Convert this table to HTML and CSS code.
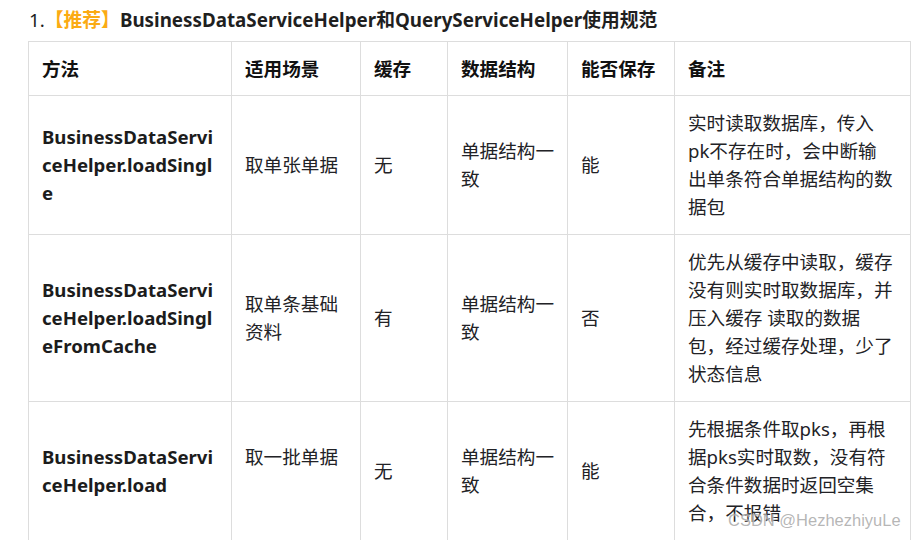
FILE: index.html
```html
<!DOCTYPE html>
<html lang="zh-CN">
<head>
<meta charset="utf-8">
<link rel="stylesheet" href="styles.css">
</head>
<body>
<div class="page">
  <p class="title"><span class="num">1.</span><span class="tag">【推荐】</span>BusinessDataServiceHelper和QueryServiceHelper使用规范</p>
  <table class="spec">
    <colgroup>
      <col class="c1"><col class="c2"><col class="c3"><col class="c4"><col class="c5"><col class="c6">
    </colgroup>
    <thead>
      <tr><th>方法</th><th>适用场景</th><th>缓存</th><th>数据结构</th><th>能否保存</th><th>备注</th></tr>
    </thead>
    <tbody>
      <tr>
        <td class="method">BusinessDataServi<br>ceHelper.loadSingl<br>e</td>
        <td>取单张单据</td>
        <td>无</td>
        <td>单据结构一致</td>
        <td>能</td>
        <td>实时读取数据库，传入<br>pk不存在时，会中断输<br>出单条符合单据结构的数<br>据包</td>
      </tr>
      <tr>
        <td class="method">BusinessDataServi<br>ceHelper.loadSingl<br>eFromCache</td>
        <td>取单条基础资料</td>
        <td>有</td>
        <td>单据结构一致</td>
        <td>否</td>
        <td>优先从缓存中读取，缓存<br>没有则实时取数据库，并<br>压入缓存 读取的数据<br>包，经过缓存处理，少了<br>状态信息</td>
      </tr>
      <tr>
        <td class="method">BusinessDataServi<br>ceHelper.load</td>
        <td>取一批单据<br>&nbsp;</td>
        <td>无</td>
        <td>单据结构一致</td>
        <td>能</td>
        <td>先根据条件取pks，再根<br>据pks实时取数，没有符<br>合条件数据时返回空集<br>合，不报错</td>
      </tr>
    </tbody>
  </table>
  <div class="watermark">CSDN @HezhezhiyuLe</div>
</div>
</body>
</html>
```

FILE: styles.css
```css
html, body {
  margin: 0;
  padding: 0;
  background: #ffffff;
}
body {
  font-family: "Noto Sans", "Noto Sans CJK SC", sans-serif;
  color: #222226;
}
.page {
  position: relative;
  width: 916px;
  height: 540px;
  overflow: hidden;
  padding: 8px 0 0 28px;
  box-sizing: border-box;
}
.title {
  margin: 0 0 0 1px;
  height: 33px;
  font-size: 18.8px;
  line-height: 24px;
  font-weight: 700;
  color: #1f1f1f;
  white-space: nowrap;
}
.title .num {
  font-weight: 400;
}
.title .tag {
  color: #fbab14;
}
.spec {
  border-collapse: collapse;
  table-layout: fixed;
  width: 882px;
  font-size: 18.6px;
  line-height: 28px;
}
.c1 { width: 203px; }
.c2 { width: 129px; }
.c3 { width: 87px; }
.c4 { width: 120px; }
.c5 { width: 107px; }
.c6 { width: 236px; }
.spec th,
.spec td {
  border: 1px solid #dddddd;
  padding: 13px 12px 13px 13px;
  text-align: left;
  vertical-align: middle;
}
.spec th {
  padding-bottom: 12px;
  font-weight: 700;
  color: #111111;
}
.spec td.method {
  font-weight: 700;
  color: #1c1c1c;
}
.watermark {
  position: absolute;
  left: 728px;
  top: 510px;
  font-family: "Liberation Sans", Arial, sans-serif;
  font-size: 16.5px;
  line-height: 20px;
  color: rgba(150, 150, 150, 0.7);
  text-shadow: 0 0 2px #ffffff;
  white-space: nowrap;
}
```
